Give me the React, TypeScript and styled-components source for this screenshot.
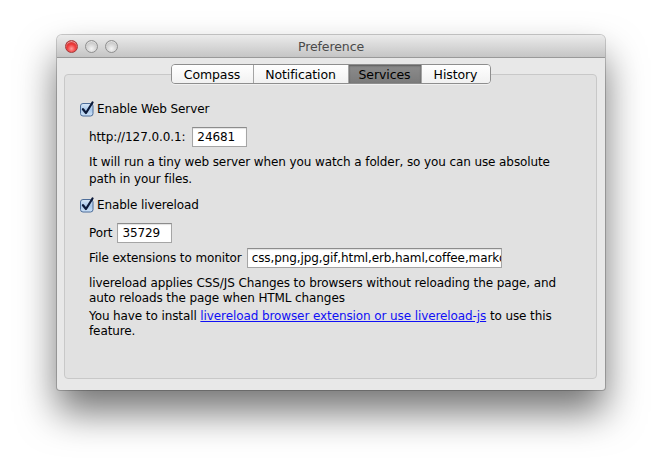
import { createGlobalStyle, styled } from 'styled-components';

const Global = createGlobalStyle`
  html, body {
    margin: 0;
    padding: 0;
    background: #ffffff;
  }
  body {
    font-family: "DejaVu Sans", "Liberation Sans", sans-serif;
    font-size: 12px;
    letter-spacing: -0.1px;
    color: #000;
  }
`;

const Page = styled.div`
  width: 662px;
  height: 469px;
  padding: 35px 0 0 57px;
  box-sizing: border-box;
  overflow: hidden;
`;

const Window = styled.div`
  width: 548px;
  height: 355px;
  background: #e8e8e8;
  border-radius: 5px 5px 3px 3px;
  box-shadow: 0 22px 38px rgba(0, 0, 0, 0.55), 0 0 0 1px rgba(0, 0, 0, 0.2);
  display: flex;
  flex-direction: column;
  overflow: hidden;
`;

const TitleBar = styled.div`
  height: 22px;
  flex: 0 0 22px;
  background: linear-gradient(#ebebeb, #c5c5c5);
  border-bottom: 1px solid #999;
  display: flex;
  align-items: center;
  position: relative;
  padding-left: 8px;
  gap: 7px;
`;

const Light = styled.span<{ $color: 'red' | 'gray' }>`
  width: 13px;
  height: 13px;
  border-radius: 50%;
  box-sizing: border-box;
  border: 1px solid ${p => (p.$color === 'red' ? '#a33a3a' : '#8f8f8f')};
  background: ${p =>
    p.$color === 'red'
      ? 'radial-gradient(circle at 50% 70%, #ff9c9c 0%, #f03c3c 45%, #b81f1f 100%)'
      : 'radial-gradient(circle at 50% 70%, #f4f4f4 0%, #d4d4d4 50%, #a8a8a8 100%)'};
  box-shadow: inset 0 1px 1px rgba(255, 255, 255, 0.6);
`;

const Title = styled.div`
  position: absolute;
  left: 0;
  right: 0;
  top: 0;
  bottom: 0;
  display: flex;
  align-items: center;
  justify-content: center;
  font-size: 12.5px;
  color: #4a4a4a;
  pointer-events: none;
`;

const Body = styled.div`
  flex: 1;
  display: flex;
  flex-direction: column;
  padding: 6px 8px 11px 7px;
`;

const TabBar = styled.div`
  display: flex;
  justify-content: center;
  position: relative;
  z-index: 1;
  height: 20px;
`;

const TabGroup = styled.div`
  display: flex;
  border: 1px solid #8e8e8e;
  border-radius: 4px;
  overflow: hidden;
  box-shadow: 0 1px 0 rgba(255, 255, 255, 0.5);
`;

const Tab = styled.div<{ $active?: boolean; $width: number }>`
  width: ${p => p.$width}px;
  height: 18px;
  display: flex;
  align-items: center;
  justify-content: center;
  font-size: 12.5px;
  color: #000;
  background: ${p => (p.$active ? 'linear-gradient(#8c8c8c, #7b7b7b)' : 'linear-gradient(#ffffff, #f1f1f1)')};
  box-shadow: ${p => (p.$active ? 'inset 0 1px 2px rgba(0,0,0,0.35)' : 'none')};
  & + & {
    border-left: 1px solid #a4a4a4;
  }
`;

const Panel = styled.div`
  flex: 1;
  margin-top: -10px;
  background: #e1e1e1;
  border: 1px solid #c8c8c8;
  border-radius: 4px;
  padding: 26px 12px 0 14px;
  display: flex;
  flex-direction: column;
`;

const CheckRow = styled.label<{ $top?: number }>`
  display: flex;
  align-items: center;
  gap: 2px;
  height: 16px;
  font-size: 12px;
  margin-top: ${p => p.$top ?? 0}px;
`;

const Section = styled.div<{ $top: number }>`
  padding-left: 10px;
  display: flex;
  flex-direction: column;
  margin-top: ${p => p.$top}px;
`;

const FieldRow = styled.div<{ $gap: number; $top?: number }>`
  display: flex;
  align-items: center;
  gap: ${p => p.$gap}px;
  height: 20px;
  margin-top: ${p => p.$top ?? 0}px;
`;

const TextField = styled.div<{ $width: number }>`
  width: ${p => p.$width}px;
  height: 20px;
  box-sizing: border-box;
  background: #fff;
  border: 1px solid #a5a5a5;
  border-top-color: #8c8c8c;
  box-shadow: inset 0 1px 1px rgba(0, 0, 0, 0.12);
  padding: 0 4px;
  display: flex;
  align-items: center;
  overflow: hidden;
  white-space: nowrap;
  font-size: 12px;
`;

const Para = styled.p<{ $top: number; $lh: number }>`
  margin: ${p => p.$top}px 0 0;
  line-height: ${p => p.$lh}px;
  font-size: 12px;
`;

const Link = styled.a`
  color: #1010f5;
  text-decoration: underline;
`;

const Checkbox = () => (
  <svg width="16" height="16" viewBox="0 0 16 16">
    <defs>
      <linearGradient id="cb" x1="0" y1="0" x2="0" y2="1">
        <stop offset="0" stopColor="#d9e8f7" />
        <stop offset="0.5" stopColor="#a9c8ea" />
        <stop offset="1" stopColor="#cde2f8" />
      </linearGradient>
    </defs>
    <rect x="1.5" y="2.5" width="12.5" height="12.5" rx="2.5" fill="url(#cb)" stroke="#4d6d99" />
    <path d="M4 8.2 L7 12 L13.5 1.5" fill="none" stroke="#0c1a3a" strokeWidth="2.2" strokeLinecap="round" strokeLinejoin="round" />
  </svg>
);

export default function App() {
  return (
    <>
      <Global />
      <Page>
        <Window>
          <TitleBar>
            <Light $color="red" />
            <Light $color="gray" />
            <Light $color="gray" />
            <Title>Preference</Title>
          </TitleBar>
          <Body>
            <TabBar>
              <TabGroup>
                <Tab $width={81}>Compass</Tab>
                <Tab $width={94}>Notification</Tab>
                <Tab $width={72} $active>Services</Tab>
                <Tab $width={68}>History</Tab>
              </TabGroup>
            </TabBar>
            <Panel>
              <CheckRow>
                <Checkbox />
                Enable Web Server
              </CheckRow>
              <Section $top={10}>
                <FieldRow $gap={7}>
                  http://127.0.0.1:
                  <TextField $width={55}>24681</TextField>
                </FieldRow>
                <Para $top={7} $lh={17}>
                  It will run a tiny web server when you watch a folder, so you can use absolute
                  <br />
                  path in your files.
                </Para>
              </Section>
              <CheckRow $top={9}>
                <Checkbox />
                Enable livereload
              </CheckRow>
              <Section $top={10}>
                <FieldRow $gap={5}>
                  Port
                  <TextField $width={55}>35729</TextField>
                </FieldRow>
                <FieldRow $gap={5} $top={5}>
                  File extensions to monitor
                  <TextField $width={255}>css,png,jpg,gif,html,erb,haml,coffee,markdown</TextField>
                </FieldRow>
                <Para $top={8} $lh={15}>
                  livereload applies CSS/JS Changes to browsers without reloading the page, and
                  <br />
                  auto reloads the page when HTML changes
                </Para>
                <Para $top={3} $lh={15}>
                  You have to install <Link href="#">livereload browser extension or use livereload-js</Link> to use this
                  <br />
                  feature.
                </Para>
              </Section>
            </Panel>
          </Body>
        </Window>
      </Page>
    </>
  );
}
